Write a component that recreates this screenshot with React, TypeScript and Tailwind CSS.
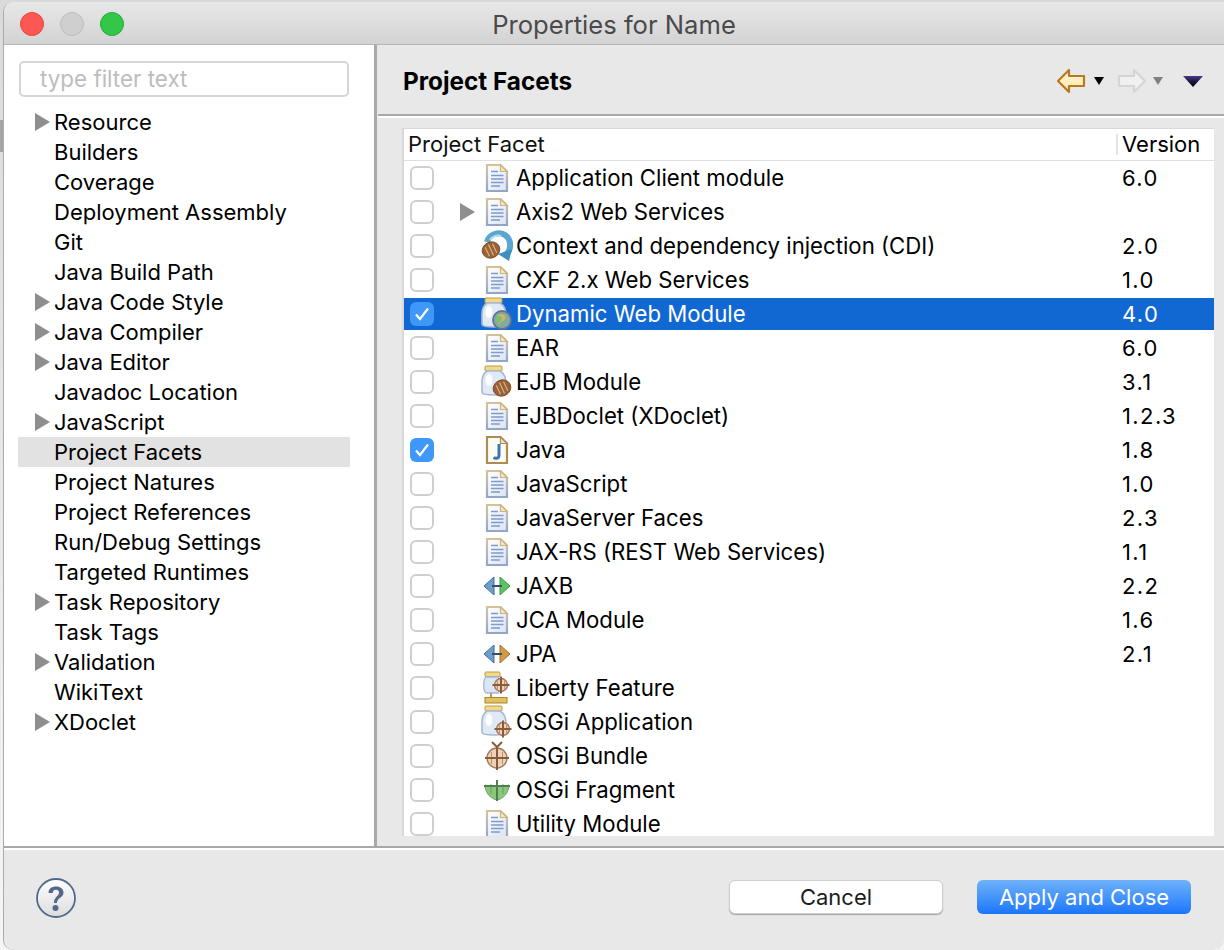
import React from "react";

const font = { fontFamily: '"Inter","Liberation Sans",sans-serif' };

function Doc() {
  return (
    <svg width="24" height="30" viewBox="0 0 24 30">
      <defs>
        <linearGradient id="dg" x1="0" y1="0" x2="1" y2="1">
          <stop offset="0" stopColor="#ffffff" />
          <stop offset="1" stopColor="#dbe3f1" />
        </linearGradient>
        <linearGradient id="ds" x1="0" y1="0" x2="0" y2="1">
          <stop offset="0" stopColor="#d4c19a" />
          <stop offset="0.35" stopColor="#bcbdb8" />
          <stop offset="1" stopColor="#92a6c8" />
        </linearGradient>
      </defs>
      <path d="M2 2H15.5L22 8.5V28H2Z" fill="url(#dg)" stroke="url(#ds)" strokeWidth="2.2" />
      <path d="M15.5 2V8.5H22Z" fill="#f6e7c4" stroke="#cdb37d" strokeWidth="1.2" />
      <path d="M6 8.5h7M6 12.5h12.5M6 16h12.5M6 19.5h12.5M6 23h9" stroke="#7d9bcd" strokeWidth="1.7" />
    </svg>
  );
}

function JavaDoc() {
  return (
    <svg width="24" height="30" viewBox="0 0 24 30">
      <path d="M2 2H15.5L22 8.5V28H2Z" fill="#fbfbf6" stroke="#ac8c50" strokeWidth="2.2" />
      <path d="M15.5 2V8.5H22Z" fill="#f3e4c2" stroke="#ac8c50" strokeWidth="1.2" />
      <path d="M14 9V20C14 23.5 11 24 8.5 22.5" fill="none" stroke="#3f73ab" strokeWidth="3" />
    </svg>
  );
}

function Bean({ x, y, r = 7 }: { x: number; y: number; r?: number }) {
  return (
    <g transform={`rotate(-25 ${x} ${y})`}>
      <ellipse cx={x} cy={y} rx={r + 1} ry={r} fill="#9a6136" stroke="#76482a" strokeWidth="0.8" />
      <path d={`M${x - 4} ${y - 5}V${y + 5}M${x} ${y - 6}V${y + 6}M${x + 4} ${y - 5}V${y + 5}`} stroke="#d9b184" strokeWidth="1.2" />
    </g>
  );
}

function Cdi() {
  return (
    <svg width="32" height="32" viewBox="0 0 32 32">
      <path d="M6 12C8 4 18 1 24 5C30 9 31 18 26 24" fill="none" stroke="#5aa6d2" strokeWidth="6" />
      <path d="M17 24L31 19L28 31Z" fill="#3f8fbf" />
      <path d="M9 10C11 6 16 5 20 6" fill="none" stroke="#b7dcf0" strokeWidth="2" />
      <Bean x={10} y={20} r={8} />
    </svg>
  );
}

function Jar({ children }: { children?: React.ReactNode }) {
  return (
    <svg width="32" height="34" viewBox="0 0 32 34">
      <rect x="4" y="1" width="17" height="5" rx="1" fill="#f1d98c" stroke="#bf9a3c" />
      <path d="M6 6H19C24 9 25 13 25 20V27C25 29 22 30 13 30C5 30 1 29 1 27V17C1 12 3 8 6 6Z" fill="#e0e9f6" stroke="#a8b8d4" strokeWidth="1.6" />
      <ellipse cx="8" cy="15" rx="3.5" ry="6" fill="#fff" />
      {children}
    </svg>
  );
}

function Crosshair({ x, y, r, bg = "#ead3b6", line = "#8c5a3a" }: { x: number; y: number; r: number; bg?: string; line?: string }) {
  return (
    <g>
      <circle cx={x} cy={y} r={r} fill={bg} stroke="#a6765a" strokeWidth="1.4" />
      <path d={`M${x - r - 2} ${y}H${x + r + 2}M${x} ${y - r - 2}V${y + r + 2}`} stroke={line} strokeWidth="2" />
      <path d={`M${x - r * 0.55} ${y - r * 0.6}V${y + r * 0.6}M${x + r * 0.55} ${y - r * 0.6}V${y + r * 0.6}`} stroke={line} strokeWidth="0.9" opacity="0.6" />
    </g>
  );
}

function WebJar() {
  return (
    <Jar>
      <circle cx="21" cy="23" r="9" fill="#7fae9f" stroke="#6a6f92" strokeWidth="1.8" />
      <path d="M17 18c4-2 9 0 7 4s-7 2-6 8" fill="#d8b365" />
      <circle cx="18" cy="22" r="3" fill="#7cc06d" />
    </Jar>
  );
}

function EjbJar() {
  return (
    <Jar>
      <Bean x={21} y={23} r={8} />
    </Jar>
  );
}

function OsgiApp() {
  return (
    <Jar>
      <Crosshair x={22} y={24} r={6.5} />
    </Jar>
  );
}

function Arrows({ color, stroke }: { color: string; stroke: string }) {
  return (
    <svg width="28" height="22" viewBox="0 0 28 22">
      <path d="M1 11L11 2V20Z" fill="#6f9cc9" stroke="#3f6d9f" strokeWidth="1" />
      <path d="M27 11L17 2V20Z" fill={color} stroke={stroke} strokeWidth="1" />
      <path d="M9 11H19" stroke="#2f4f6f" strokeWidth="2" />
    </svg>
  );
}

function Liberty() {
  return (
    <svg width="30" height="34" viewBox="0 0 30 34">
      <rect x="3" y="1" width="15" height="4.5" rx="1" fill="#f1d98c" stroke="#bf9a3c" />
      <path d="M4 6H16C19 8 19 19 16 22H4C1 20 1 8 4 6Z" fill="#dbe6f5" stroke="#a8b8d4" strokeWidth="1.4" />
      <Crosshair x={19} y={14} r={6.5} />
      <path d="M9 22V27" stroke="#bf9a3c" strokeWidth="2" />
      <rect x="3" y="26.5" width="22" height="5.5" fill="#e0c25f" stroke="#a8862c" />
    </svg>
  );
}

function Bundle() {
  return (
    <svg width="28" height="30" viewBox="0 0 28 30">
      <path d="M9 1L14 6L19 1" fill="none" stroke="#8c5a3a" strokeWidth="2" />
      <Crosshair x={14} y={17} r={10} />
    </svg>
  );
}

function Fragment_() {
  return (
    <svg width="28" height="24" viewBox="0 0 28 24">
      <path d="M2 7C8 9 20 9 26 7C26 15 20 21 14 22C8 21 2 15 2 7Z" fill="#8ac77d" stroke="#6fa565" />
      <path d="M1 8H27M14 2V23" stroke="#4f8047" strokeWidth="2" />
      <path d="M8 6V16M20 6V16" stroke="#4f8047" strokeWidth="1" opacity="0.6" />
    </svg>
  );
}

const Tri = ({ c = "#8e8e8e" }: { c?: string }) => (
  <svg width="15" height="18" viewBox="0 0 15 18"><path d="M0 0L15 9L0 18Z" fill={c} /></svg>
);

const treeItems: [string, boolean][] = [
  ["Resource", true], ["Builders", false], ["Coverage", false], ["Deployment Assembly", false], ["Git", false],
  ["Java Build Path", false], ["Java Code Style", true], ["Java Compiler", true], ["Java Editor", true],
  ["Javadoc Location", false], ["JavaScript", true], ["Project Facets", false], ["Project Natures", false],
  ["Project References", false], ["Run/Debug Settings", false], ["Targeted Runtimes", false], ["Task Repository", true],
  ["Task Tags", false], ["Validation", true], ["WikiText", false], ["XDoclet", true],
];

type Row = { name: string; ver: string; icon: React.ReactNode; checked?: boolean; sel?: boolean; tri?: boolean };
const rows: Row[] = [
  { name: "Application Client module", ver: "6.0", icon: <Doc /> },
  { name: "Axis2 Web Services", ver: "", icon: <Doc />, tri: true },
  { name: "Context and dependency injection (CDI)", ver: "2.0", icon: <Cdi /> },
  { name: "CXF 2.x Web Services", ver: "1.0", icon: <Doc /> },
  { name: "Dynamic Web Module", ver: "4.0", icon: <WebJar />, checked: true, sel: true },
  { name: "EAR", ver: "6.0", icon: <Doc /> },
  { name: "EJB Module", ver: "3.1", icon: <EjbJar /> },
  { name: "EJBDoclet (XDoclet)", ver: "1.2.3", icon: <Doc /> },
  { name: "Java", ver: "1.8", icon: <JavaDoc />, checked: true },
  { name: "JavaScript", ver: "1.0", icon: <Doc /> },
  { name: "JavaServer Faces", ver: "2.3", icon: <Doc /> },
  { name: "JAX-RS (REST Web Services)", ver: "1.1", icon: <Doc /> },
  { name: "JAXB", ver: "2.2", icon: <Arrows color="#5fc25f" stroke="#3d9a45" /> },
  { name: "JCA Module", ver: "1.6", icon: <Doc /> },
  { name: "JPA", ver: "2.1", icon: <Arrows color="#d39a45" stroke="#a8732c" /> },
  { name: "Liberty Feature", ver: "", icon: <Liberty /> },
  { name: "OSGi Application", ver: "", icon: <OsgiApp /> },
  { name: "OSGi Bundle", ver: "", icon: <Bundle /> },
  { name: "OSGi Fragment", ver: "", icon: <Fragment_ /> },
  { name: "Utility Module", ver: "", icon: <Doc /> },
];

function Check({ on }: { on?: boolean }) {
  return on ? (
    <div className="w-6 h-6 rounded-[6px] bg-[#3f97f8] flex items-center justify-center">
      <svg width="16" height="14" viewBox="0 0 16 14"><path d="M2 7.5L6 12L14 1.5" fill="none" stroke="#fff" strokeWidth="2.2" /></svg>
    </div>
  ) : (
    <div className="w-6 h-6 rounded-[6px] bg-white border-2 border-[#cfcfcf]" />
  );
}

export default function App() {
  return (
    <div className="w-[1224px] h-[950px] bg-gradient-to-b from-[#dadada] to-[#f5f5f5] pl-[3px] pt-0.5 overflow-hidden text-[22px] text-black relative" style={font}>
      <div className="absolute left-0 top-[120px] w-[3px] h-[32px] bg-[#a5a5a5]" />
      <div className="w-[1221px] h-[948px] flex flex-col bg-[#e8e8e8] rounded-tl-[10px] rounded-b-[10px] overflow-hidden border-l border-[#ababab]">
        <div className="h-[43px] shrink-0 relative flex items-center justify-center bg-gradient-to-b from-[#e9e8e9] to-[#d4d3d4] border-b border-[#b5b5b5]">
          <div className="absolute left-4 top-[10px] flex gap-4">
            <div className="w-6 h-6 rounded-full bg-[#fc5753] border border-[#df4744]" />
            <div className="w-6 h-6 rounded-full bg-[#cfcfcf] border border-[#bcbcbc]" />
            <div className="w-6 h-6 rounded-full bg-[#33c748] border border-[#27aa35]" />
          </div>
          <span className="text-[#4a4a4a] text-[25.6px] leading-none mt-[3px]">Properties for Name</span>
        </div>

        <div className="h-[801px] shrink-0 flex">
          <div className="w-[370px] shrink-0 bg-white pt-4 pl-[15px] pr-[24px]">
            <div className="h-9 border-2 border-[#d6d6d6] rounded-[5px] w-[330px] pl-[19px] flex items-center text-[#bdbdbd] text-[22.4px]">type filter text</div>
            <div className="mt-[10px] w-[332px] -ml-px">
              {treeItems.map(([t, arrow]) => (
                <div key={t} className={`h-[30px] flex items-center pl-[36px] relative ${t === "Project Facets" ? "bg-[#e2e2e2]" : ""}`}>
                  {arrow && <span className="absolute left-[17px] top-[6px] flex"><Tri /></span>}
                  {t}
                </div>
              ))}
            </div>
          </div>
          <div className="w-1 shrink-0 bg-[#a9a9a9] border-r border-[#e8e8e8]" />
          <div className="flex-1 flex flex-col min-w-0">
            <div className="h-[71px] shrink-0 flex items-center justify-between border-b-[2px] border-[#a9a9a9] pl-[25px] pr-[21px]">
              <span className="font-bold text-[24.3px] leading-none mt-[3px]">Project Facets</span>
              <div className="flex items-center mt-[3px]">
                <svg width="30" height="26" viewBox="0 0 30 26"><defs><linearGradient id="ba" x1="0" y1="0" x2="0" y2="1"><stop offset="0" stopColor="#fff6dc" /><stop offset="1" stopColor="#ffe6a6" /></linearGradient></defs><path d="M2 13L13 2V8H28V18H13V24Z" fill="url(#ba)" stroke="#b87a1f" strokeWidth="2.2" strokeLinejoin="round" /></svg>
                <svg className="ml-[8px]" width="10" height="8" viewBox="0 0 10 8"><path d="M0 0H10L5 8Z" fill="#000" /></svg>
                <svg className="ml-[13px]" width="30" height="26" viewBox="0 0 30 26"><path d="M28 13L17 2V8H2V18H17V24Z" fill="#f0f0f0" stroke="#d5d5d5" strokeWidth="2.2" strokeLinejoin="round" /></svg>
                <svg className="ml-[6px]" width="10" height="8" viewBox="0 0 10 8"><path d="M0 0H10L5 8Z" fill="#808080" /></svg>
                <svg className="ml-[20px]" width="20" height="11" viewBox="0 0 20 11"><defs><linearGradient id="mn" x1="0" y1="0" x2="0" y2="1"><stop offset="0" stopColor="#4a3a86" /><stop offset="0.5" stopColor="#1d1640" /><stop offset="1" stopColor="#000" /></linearGradient></defs><path d="M0 0H20L10 11Z" fill="url(#mn)" /></svg>
              </div>
            </div>
            <div className="flex-1 border-t-[2px] border-white pt-[10px] pl-[24px] pr-[9px] min-h-0">
              <div className="w-[812px] h-[708px] bg-white border-l-2 border-t border-[#d8d8d8] overflow-hidden">
                <div className="h-[32px] flex items-center border-b border-[#e0e0e0]">
                  <span className="pl-[4px] w-[712px] text-[#111]">Project Facet</span>
                  <span className="border-l-2 border-[#e4e4e4] pl-[4px] leading-[21px]">Version</span>
                </div>
                {rows.map((r) => (
                  <div key={r.name} className={`h-[34px] flex items-center ${r.sel ? "bg-[#1268d3] bg-clip-content py-px text-white" : ""}`}>
                    <div className="w-[40px] pl-[6px] shrink-0"><Check on={r.checked} /></div>
                    <div className="w-[36px] shrink-0 flex justify-center pl-[10px]">{r.tri && <Tri />}</div>
                    <div className="w-[36px] shrink-0 flex justify-center items-center h-[32px] pr-[2px] overflow-visible">{r.icon}</div>
                    <span className="w-[606px] shrink-0 whitespace-nowrap text-[22.2px]">{r.name}</span>
                    <span className="tracking-[1.4px]">{r.ver}</span>
                  </div>
                ))}
              </div>
            </div>
          </div>
        </div>

        <div className="flex-1 border-t-[2px] border-[#a9a9a9] relative">
          <div className="h-full border-t-[2px] border-white flex items-center justify-between pl-[32px] pr-[33px]">
            <svg className="mb-[4px]" width="40" height="40" viewBox="0 0 40 40">
              <defs>
                <linearGradient id="hg" x1="0" y1="0" x2="0" y2="1"><stop offset="0" stopColor="#fff" /><stop offset="1" stopColor="#dcdcdc" /></linearGradient>
              </defs>
              <circle cx="20" cy="20" r="19" fill="url(#hg)" stroke="#52698c" strokeWidth="1.8" />
              <path d="M12.5 15C12.5 10.5 16 8.5 20 8.5C24.5 8.5 27.5 11 27.5 14.5C27.5 20 21 19.5 21 25H18C18 18.5 23 18.5 23 14.5C23 12.7 21.8 11.8 20 11.8C18 11.8 16.8 13 16.8 15Z" fill="#52698c" />
              <circle cx="19.5" cy="30" r="3" fill="#52698c" />
            </svg>
            <div className="flex items-center gap-[34px] mb-[6px]">
              <div className="w-[214px] h-[34px] rounded-[6px] bg-white border border-[#cfcfcf] shadow-[0_1px_1px_rgba(0,0,0,0.3)] flex items-center justify-center pt-px text-[#1c1c1c]">Cancel</div>
              <div className="w-[214px] h-[34px] rounded-[6px] bg-gradient-to-b from-[#6db2f9] to-[#1a74fb] flex items-center justify-center pt-px text-white">Apply and Close</div>
            </div>
          </div>
        </div>
      </div>
    </div>
  );
}
